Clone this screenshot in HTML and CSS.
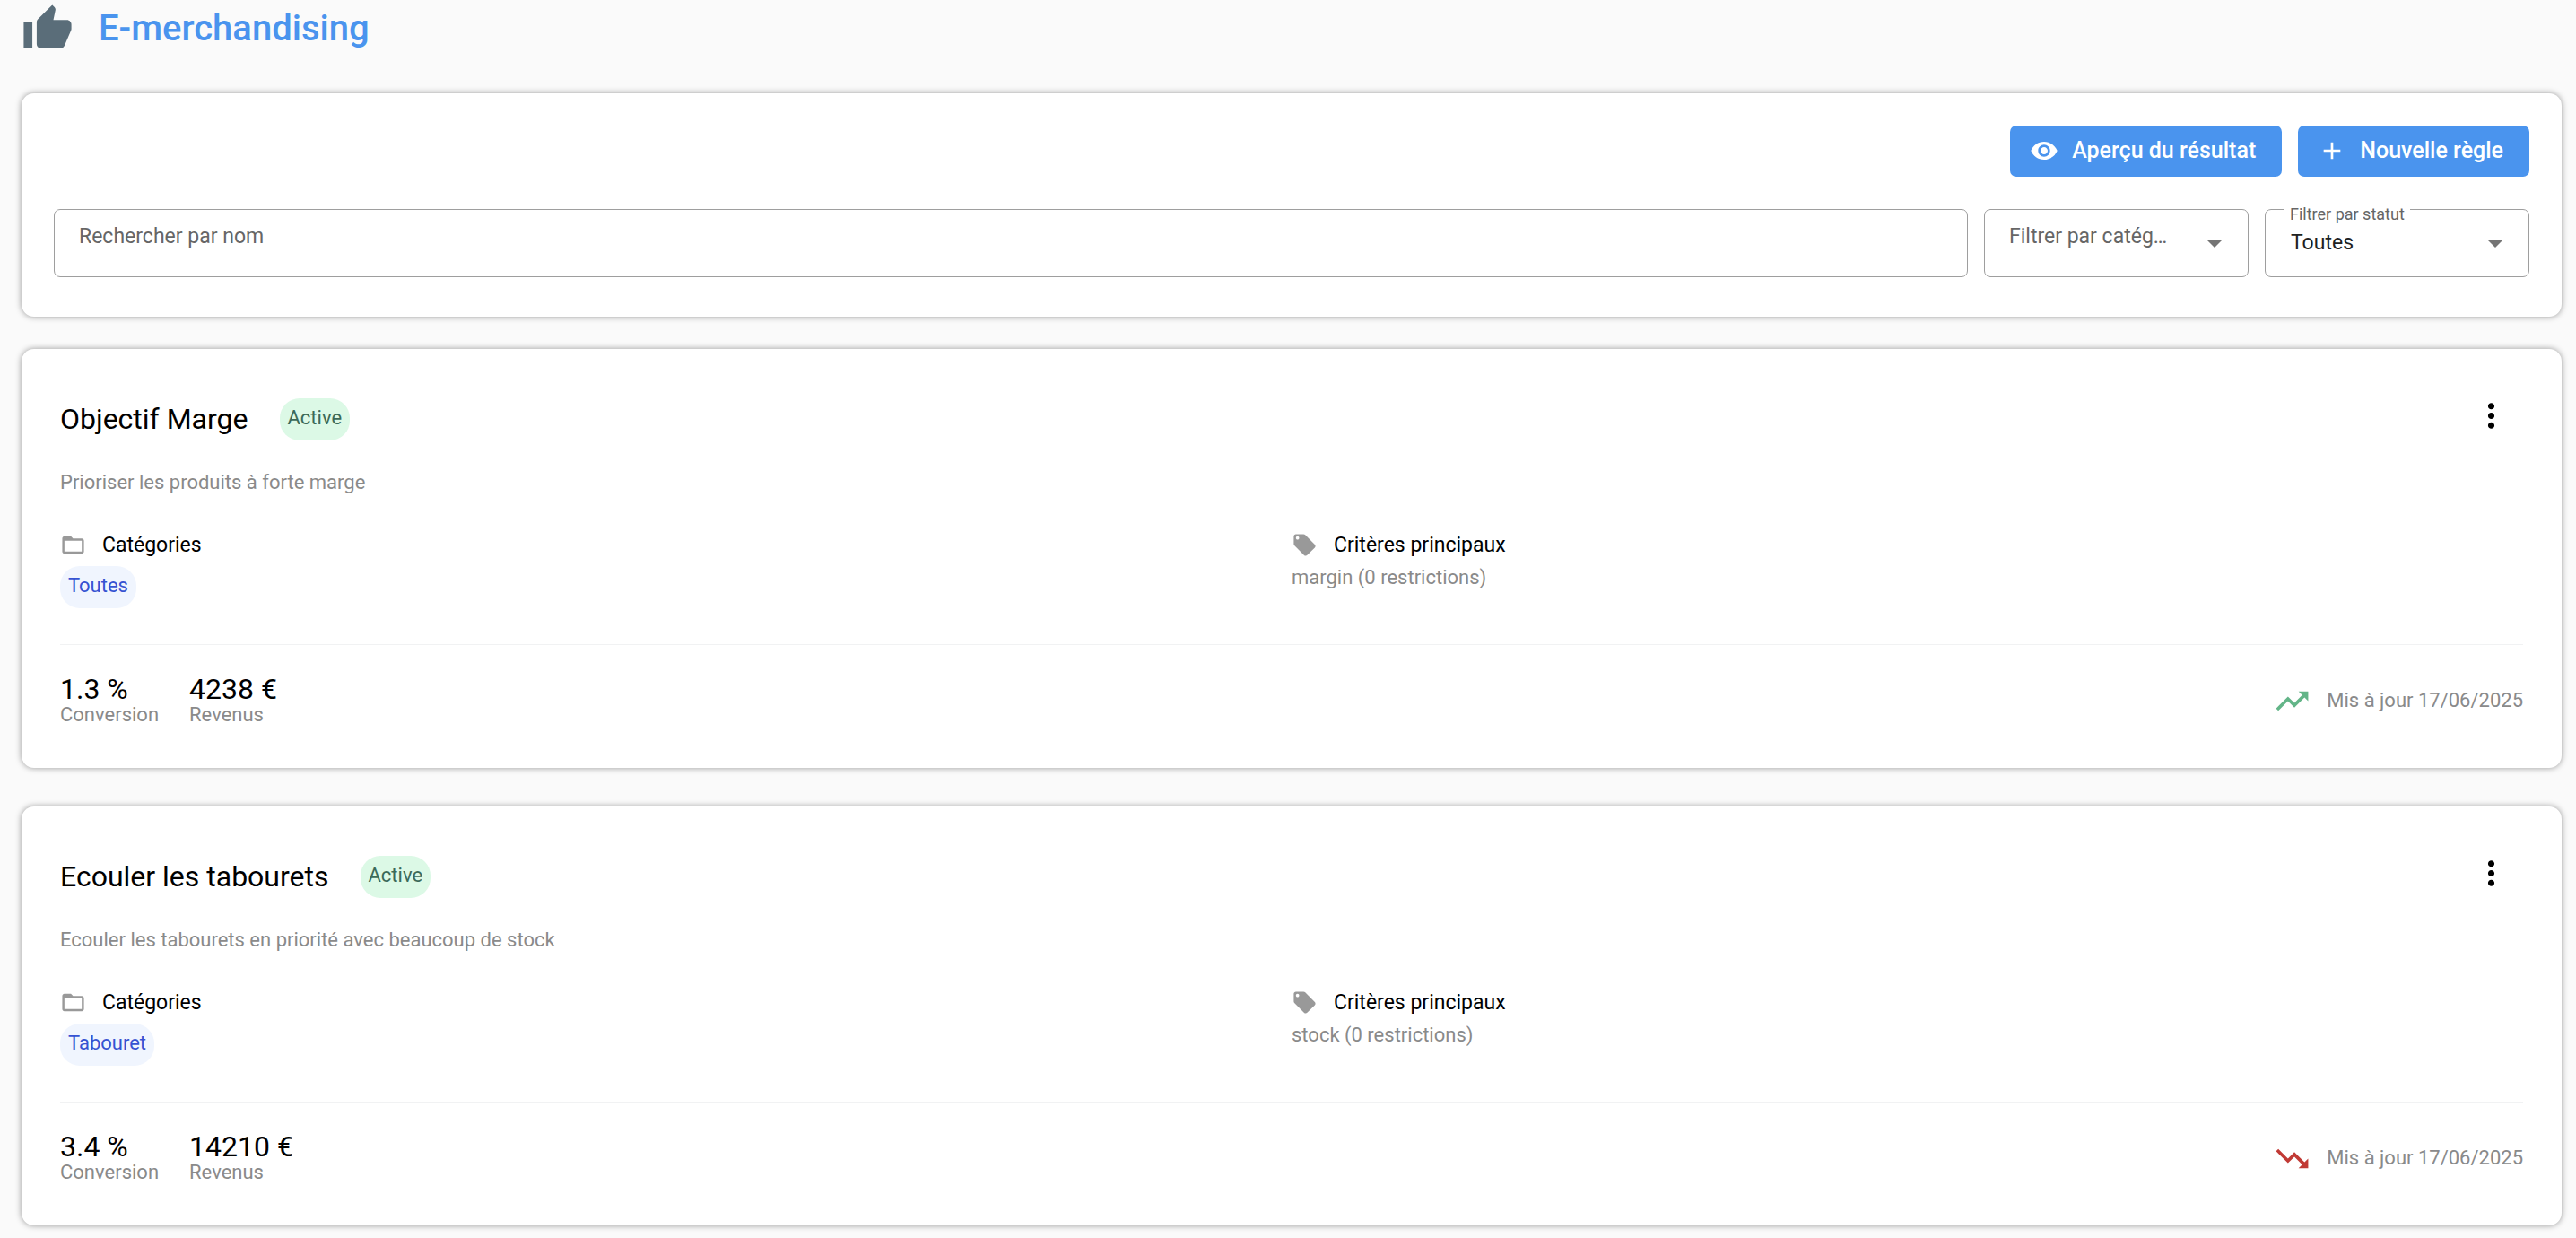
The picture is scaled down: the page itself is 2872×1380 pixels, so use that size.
FILE: index.html
```html
<!DOCTYPE html>
<html lang="fr">
<head>
<meta charset="utf-8">
<meta name="viewport" content="width=device-width, initial-scale=1">
<title>E-merchandising</title>
<link rel="stylesheet" href="styles.css">
</head>
<body>
<header class="page-header">
  <svg class="page-icon" viewBox="0 0 24 24" aria-hidden="true"><path d="M1 21h4V9H1v12zm22-11c0-1.1-.9-2-2-2h-6.31l.95-4.57.03-.32c0-.41-.17-.79-.44-1.06L14.17 1 7.59 7.59C7.22 7.95 7 8.45 7 9v10c0 1.1.9 2 2 2h9c.83 0 1.54-.5 1.84-1.22l3.02-7.05c.09-.23.14-.47.14-.73v-2z"/></svg>
  <h1 class="page-title">E-merchandising</h1>
</header>
<main class="page">
  <section class="card toolbar">
    <div class="actions">
      <button class="btn" type="button">
        <svg class="btn-icon" viewBox="0 0 24 24" aria-hidden="true"><path d="M12 4.5C7 4.5 2.73 7.61 1 12c1.73 4.39 6 7.5 11 7.5s9.270-3.110 11-7.500c-1.730-4.390-6-7.500-11-7.500zM12 17c-2.760 0-5-2.240-5-5s2.240-5 5-5 5 2.240 5 5-2.240 5-5 5zm0-8c-1.660 0-3 1.340-3 3s1.340 3 3 3 3-1.340 3-3-1.340-3-3-3z"/></svg>
        Aperçu du résultat
      </button>
      <button class="btn" type="button">
        <svg class="btn-icon" viewBox="0 0 24 24" aria-hidden="true"><path d="M19 13h-6v6h-2v-6H5v-2h6V5h2v6h6v2z"/></svg>
        Nouvelle règle
      </button>
    </div>
    <div class="filters">
      <div class="field field-search">
        <input class="control" type="text" id="search">
        <label class="field-label" for="search">Rechercher par nom</label>
      </div>
      <div class="field field-select">
        <select class="control" id="category"><option value=""></option><option>Tabouret</option></select>
        <label class="field-label" for="category">Filtrer par catégorie</label>
        <svg class="arrow" viewBox="0 0 10 5" aria-hidden="true"><path d="M0 0h10L5 5z"/></svg>
      </div>
      <div class="field field-select">
        <select class="control" id="status"><option>Toutes</option><option>Active</option></select>
        <label class="field-label field-label-floating" for="status">Filtrer par statut</label>
        <svg class="arrow" viewBox="0 0 10 5" aria-hidden="true"><path d="M0 0h10L5 5z"/></svg>
      </div>
    </div>
  </section>

  <article class="card rule">
    <div class="rule-head">
      <h2 class="rule-title">Objectif Marge</h2>
      <span class="chip chip-active">Active</span>
      <button class="menu-btn" type="button" aria-label="Actions">
        <svg class="menu-icon" viewBox="0 0 24 24" aria-hidden="true"><path d="M12 8c1.100 0 2-.9 2-2s-.9-2-2-2-2 .9-2 2 .9 2 2 2zm0 2c-1.100 0-2 .9-2 2s.9 2 2 2 2-.9 2-2-.9-2-2-2zm0 6c-1.100 0-2 .9-2 2s.9 2 2 2 2-.9 2-2-.9-2-2-2z"/></svg>
      </button>
    </div>
    <p class="rule-desc">Prioriser les produits à forte marge</p>
    <div class="details">
      <div class="detail">
        <h3 class="detail-title"><svg class="detail-icon" viewBox="0 0 24 24" aria-hidden="true"><path d="M20 6h-8l-2-2H4c-1.100 0-1.990.9-1.990 2L2 18c0 1.100.9 2 2 2h16c1.100 0 2-.9 2-2V8c0-1.100-.9-2-2-2zm0 12H4V8h16v10z"/></svg>Catégories</h3>
        <span class="chip chip-category">Toutes</span>
      </div>
      <div class="detail">
        <h3 class="detail-title"><svg class="detail-icon" viewBox="0 0 24 24" aria-hidden="true"><path d="M21.410 11.580l-9-9C12.050 2.220 11.550 2 11 2H4c-1.100 0-2 .9-2 2v7c0 .55.22 1.050.59 1.420l9 9c.36.36.86.58 1.410.58.55 0 1.050-.22 1.410-.59l7-7c.37-.36.59-.86.59-1.410 0-.55-.23-1.060-.59-1.420zM5.500 7C4.670 7 4 6.330 4 5.500S4.670 4 5.500 4 7 4.670 7 5.500 6.330 7 5.500 7z"/></svg>Critères principaux</h3>
        <p class="detail-text">margin (0 restrictions)</p>
      </div>
    </div>
    <footer class="rule-foot">
      <dl class="stats">
        <div class="stat"><dt class="stat-name">Conversion</dt><dd class="stat-value">1.3 %</dd></div>
        <div class="stat"><dt class="stat-name">Revenus</dt><dd class="stat-value">4238 €</dd></div>
      </dl>
      <p class="updated"><svg class="trend trend-up" viewBox="0 0 24 24" aria-hidden="true"><path d="M16 6l2.290 2.290-4.880 4.880-4-4L2 16.590 3.410 18l6-6 4 4 6.300-6.290L22 12V6z"/></svg>Mis à jour 17/06/2025</p>
    </footer>
  </article>

  <article class="card rule">
    <div class="rule-head">
      <h2 class="rule-title">Ecouler les tabourets</h2>
      <span class="chip chip-active">Active</span>
      <button class="menu-btn" type="button" aria-label="Actions">
        <svg class="menu-icon" viewBox="0 0 24 24" aria-hidden="true"><path d="M12 8c1.100 0 2-.9 2-2s-.9-2-2-2-2 .9-2 2 .9 2 2 2zm0 2c-1.100 0-2 .9-2 2s.9 2 2 2 2-.9 2-2-.9-2-2-2zm0 6c-1.100 0-2 .9-2 2s.9 2 2 2 2-.9 2-2-.9-2-2-2z"/></svg>
      </button>
    </div>
    <p class="rule-desc">Ecouler les tabourets en priorité avec beaucoup de stock</p>
    <div class="details">
      <div class="detail">
        <h3 class="detail-title"><svg class="detail-icon" viewBox="0 0 24 24" aria-hidden="true"><path d="M20 6h-8l-2-2H4c-1.100 0-1.990.9-1.990 2L2 18c0 1.100.9 2 2 2h16c1.100 0 2-.9 2-2V8c0-1.100-.9-2-2-2zm0 12H4V8h16v10z"/></svg>Catégories</h3>
        <span class="chip chip-category">Tabouret</span>
      </div>
      <div class="detail">
        <h3 class="detail-title"><svg class="detail-icon" viewBox="0 0 24 24" aria-hidden="true"><path d="M21.410 11.580l-9-9C12.050 2.220 11.550 2 11 2H4c-1.100 0-2 .9-2 2v7c0 .55.22 1.050.59 1.420l9 9c.36.36.86.58 1.410.58.55 0 1.050-.22 1.410-.59l7-7c.37-.36.59-.86.59-1.410 0-.55-.23-1.060-.59-1.420zM5.500 7C4.670 7 4 6.330 4 5.500S4.670 4 5.500 4 7 4.670 7 5.500 6.330 7 5.500 7z"/></svg>Critères principaux</h3>
        <p class="detail-text">stock (0 restrictions)</p>
      </div>
    </div>
    <footer class="rule-foot">
      <dl class="stats">
        <div class="stat"><dt class="stat-name">Conversion</dt><dd class="stat-value">3.4 %</dd></div>
        <div class="stat"><dt class="stat-name">Revenus</dt><dd class="stat-value">14210 €</dd></div>
      </dl>
      <p class="updated"><svg class="trend trend-down" viewBox="0 0 24 24" aria-hidden="true"><path d="M16 18l2.290-2.290-4.880-4.880-4 4L2 7.410 3.410 6l6 6 4-4 6.300 6.290L22 12v6z"/></svg>Mis à jour 17/06/2025</p>
    </footer>
  </article>
</main>
</body>
</html>
```
FILE: styles.css
```css
* {
  box-sizing: border-box;
}

body,
h1,
h2,
h3,
p,
dl,
dd {
  margin: 0;
}

body {
  background: #fafafa;
  color: #000;
  font-family: Roboto, "Liberation Sans", sans-serif;
  font-size: 22px;
  line-height: 26px;
}

svg {
  flex: none;
  fill: currentColor;
}

/* Page header */
.page-header {
  display: flex;
  align-items: center;
  gap: 28px;
  padding: 3px 24px 0;
}

.page-icon {
  width: 58px;
  height: 58px;
  color: #5a6d79;
}

.page-title {
  color: #4a94ee;
  font-size: 40px;
  font-weight: 500;
  line-height: 46px;
}

.page {
  padding: 43px 16px 14px 24px;
}

.card {
  background: #fff;
  border-radius: 14px;
  box-shadow: 0 0 7px rgba(0, 0, 0, 0.4);
}

/* Toolbar */
.toolbar {
  padding: 36px 36px 44px;
  margin-bottom: 36px;
}

.actions,
.filters {
  display: flex;
  justify-content: flex-end;
  gap: 18px;
}

.filters {
  margin-top: 36px;
}

.btn {
  display: flex;
  align-items: center;
  gap: 15px;
  height: 57px;
  padding: 0 29px 2px 22px;
  border: 0;
  border-radius: 7px;
  background: #4a94ee;
  color: #fff;
  font: 500 25px/28px Roboto, "Liberation Sans", sans-serif;
}

.btn-icon {
  width: 32px;
  height: 32px;
}

.field {
  position: relative;
}

.field-search {
  flex: 1;
}

.field-select {
  width: 295px;
}

.control {
  display: block;
  width: 100%;
  height: 76px;
  padding: 0 28px;
  border: 1px solid #9e9e9e;
  border-radius: 7px;
  background: #fff;
  color: #212121;
  font: 400 23px/28px Roboto, "Liberation Sans", sans-serif;
  appearance: none;
}

.field-label {
  position: absolute;
  top: 17px;
  left: 28px;
  max-width: 184px;
  overflow: hidden;
  color: #666;
  font-size: 23px;
  line-height: 28px;
  text-overflow: ellipsis;
  white-space: nowrap;
  pointer-events: none;
}

.field-search .field-label {
  max-width: none;
}

.field-label-floating {
  top: -5px;
  left: 22px;
  padding: 0 6px;
  background: #fff;
  font-size: 18px;
  line-height: 22px;
}

.arrow {
  position: absolute;
  top: 34px;
  right: 29px;
  width: 18px;
  height: 9px;
  color: #757575;
  pointer-events: none;
}

/* Rule cards */
.rule {
  padding: 43px 43px 46px;
}

.rule + .rule {
  margin-top: 43px;
}

.rule-head {
  display: flex;
  align-items: center;
  height: 70px;
}

.rule-title {
  margin-right: 35px;
  font-size: 32px;
  font-weight: 400;
  line-height: 38px;
}

.chip {
  display: inline-block;
  padding: 9px 9px 12px;
  border-radius: 22px;
}

.chip-active {
  background: #dcf9e6;
  color: #3b6a59;
}

.chip-category {
  background: #f0f5fe;
  color: #3653d2;
}

.menu-btn {
  display: grid;
  place-items: center;
  width: 72px;
  height: 70px;
  margin-left: auto;
  padding: 0 0 7px;
  border: 0;
  background: none;
  color: #000;
}

.menu-icon {
  width: 43px;
  height: 43px;
}

.rule-desc,
.detail-text {
  color: #8a8a8a;
}

.rule-desc {
  margin-top: 23px;
}

.details {
  display: grid;
  grid-template-columns: 1fr 1fr;
  margin-top: 42px;
}

.detail {
  min-height: 85px;
}

.detail-title {
  display: flex;
  align-items: center;
  gap: 18px;
  margin-bottom: 9px;
  font-size: 23px;
  font-weight: 400;
  line-height: 28px;
}

.detail-icon {
  width: 29px;
  height: 29px;
  color: #999;
}

.rule-foot {
  display: flex;
  align-items: center;
  justify-content: space-between;
  margin-top: 40px;
  padding-top: 33px;
  border-top: 1px solid #f1f2f3;
}

.stats {
  display: flex;
  gap: 34px;
}

.stat {
  display: flex;
  flex-direction: column-reverse;
}

.stat-name {
  color: #8a8a8a;
}

.stat-value {
  font-size: 32px;
  line-height: 32px;
}

.updated {
  display: flex;
  align-items: center;
  gap: 17px;
  color: #8a8a8a;
}

.trend {
  width: 43px;
  height: 43px;
}

.trend-up {
  color: #63b588;
}

.trend-down {
  color: #c13a35;
}
```
